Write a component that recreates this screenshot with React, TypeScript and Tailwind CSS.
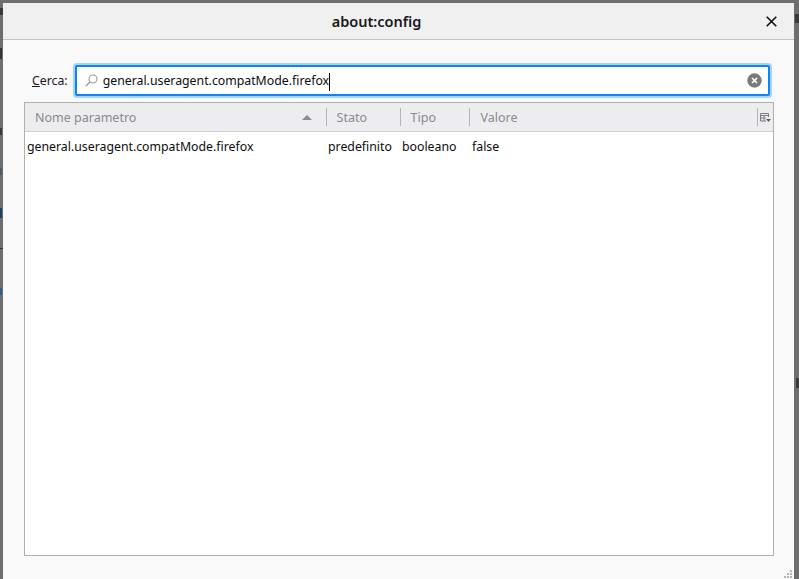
const prefFont = "font-['Noto_Sans','Open_Sans',sans-serif]";

function SearchIcon() {
  return (
    <svg width="13" height="13" viewBox="0 0 13 13" fill="none" stroke="#9a9a9a" strokeWidth="1.1">
      <circle cx="8" cy="5" r="4" />
      <path d="M5 8 L1 12" strokeWidth="1.4" />
    </svg>
  );
}

function ClearIcon() {
  return (
    <svg width="15" height="15" viewBox="0 0 15 15">
      <circle cx="7.5" cy="7.5" r="7.2" fill="#7a7a7a" />
      <path d="M5 5 L10 10 M10 5 L5 10" stroke="#fff" strokeWidth="1.7" />
    </svg>
  );
}

function ColumnPicker() {
  return (
    <svg width="11" height="11" viewBox="0 0 11 11" fill="none">
      <path d="M0.5 9 V1.5 H8.5 V5 M0.5 3.5 H8.5 M4 3.5 V9 M0.5 6 H6 M0.5 9 H6" stroke="#7c7c7c" />
      <path d="M6 7 H11 L8.5 10 Z" fill="#5f5f5f" />
    </svg>
  );
}

function HeaderCell({ label, width, divider }: { label: string; width: string; divider?: boolean }) {
  return (
    <div className={`flex items-center h-full ${width}`}>
      {divider && <div className="w-px h-[18px] bg-[#b4b4b4] mr-[10px]" />}
      <span className="pt-[2px] text-[#8a8a8f]">{label}</span>
    </div>
  );
}

export default function App() {
  return (
    <div className={`relative w-[799px] h-[579px] overflow-hidden bg-[#6e6e6e] pl-[3px] pt-[3px] pr-[5px] ${prefFont} text-[12.3px]`}>
      {/* scraps of the page behind the dialog */}
      <div className="absolute left-0 top-[8px] w-[3px] h-[7px] bg-[#3a3a3a]" />
      <div className="absolute left-0 top-[48px] w-[2px] h-[11px] bg-[#333]" />
      <div className="absolute left-0 top-[128px] w-[2px] h-[7px] bg-[#3a3a3a]" />
      <div className="absolute left-0 top-[168px] w-[2px] h-[7px] bg-[#4a5a6a]" />
      <div className="absolute left-0 top-[208px] w-[2px] h-[10px] bg-[#1f3f66]" />
      <div className="absolute left-0 top-[248px] w-[3px] h-px bg-[#333]" />
      <div className="absolute left-0 top-[288px] w-[2px] h-[7px] bg-[#2f5f8f]" />
      <div className="absolute right-0 top-[14px] w-[4px] h-[9px] bg-[#3a3a3a]" />
      <div className="absolute right-0 top-[378px] w-[3px] h-[10px] bg-[#3a3a3a]" />

      <div className="relative flex flex-col h-[576px] rounded-t-[3px] bg-[#f9f9fa]">
        <div className="flex items-center h-[37px] border-b border-[#c4c4c4] bg-[#f0f0f0]">
          <div className="flex-1 text-center text-[14.5px] font-semibold text-[#18181a] pr-[16px] pt-[2px]">about:config</div>
          <svg className="mr-[17px]" width="11" height="11" viewBox="0 0 11 11" stroke="#111" strokeWidth="1.6">
            <path d="M0.7 0.7 L10.3 10.3 M10.3 0.7 L0.7 10.3" />
          </svg>
        </div>

        <div className="flex items-center pl-[29px] pr-[24px] mt-[25px] h-[31px]">
          <label className="text-[#18181a] mr-[7px] pt-[2px]">
            <span className="underline">C</span>erca:
          </label>
          <div className="flex items-center flex-1 h-[31px] bg-white border-2 border-[#0a84ff] rounded-[2px] shadow-[0_0_0_2px_#a9d3ff] pl-[8px] pr-[6px]">
            <SearchIcon />
            <span className="ml-[5px] pt-[2px] text-[#0c0c0d]">general.useragent.compatMode.firefox</span>
            <div className="w-px h-[18px] mt-[2px] bg-black" />
            <div className="flex-1" />
            <ClearIcon />
          </div>
        </div>

        <div className="flex flex-col ml-[21px] mr-[20px] mt-[6px] h-[454px] bg-white border border-[#b0b0b0]">
          <div className="flex items-center h-[29px] pl-[10px] bg-[#ededf0] border-b border-[#cfcfd8] text-[12.5px]">
            <div className="flex items-center w-[291px] h-full text-[#8a8a8f]">
              <span className="flex-1 pt-[2px]">Nome parametro</span>
              <span className="w-0 h-0 mr-[14px] border-x-[5px] border-x-transparent border-b-[5px] border-b-[#8a8a8f]" />
            </div>
            <HeaderCell label="Stato" width="w-[74px]" divider />
            <HeaderCell label="Tipo" width="w-[70px]" divider />
            <HeaderCell label="Valore" width="w-[288px]" divider />
            <div className="w-px h-[18px] bg-[#b4b4b4] ml-auto" />
            <div className="w-[15px] flex justify-center">
              <ColumnPicker />
            </div>
          </div>
          <div className="flex items-center h-[31px] pl-[2px] text-[#0c0c0d]">
            <span className="w-[301px]">general.useragent.compatMode.firefox</span>
            <span className="w-[74px]">predefinito</span>
            <span className="w-[70px]">booleano</span>
            <span>false</span>
          </div>
        </div>

        <div className="flex justify-end mt-auto pr-[2px] pb-[1px]">
          <div className="grid grid-cols-3 gap-px w-[8px] h-[8px]">
            <span />
            <span />
            <span className="bg-[#b5b5b5]" />
            <span />
            <span className="bg-[#b5b5b5]" />
            <span className="bg-[#b5b5b5]" />
            <span className="bg-[#b5b5b5]" />
            <span className="bg-[#b5b5b5]" />
            <span className="bg-[#b5b5b5]" />
          </div>
        </div>
      </div>
    </div>
  );
}
